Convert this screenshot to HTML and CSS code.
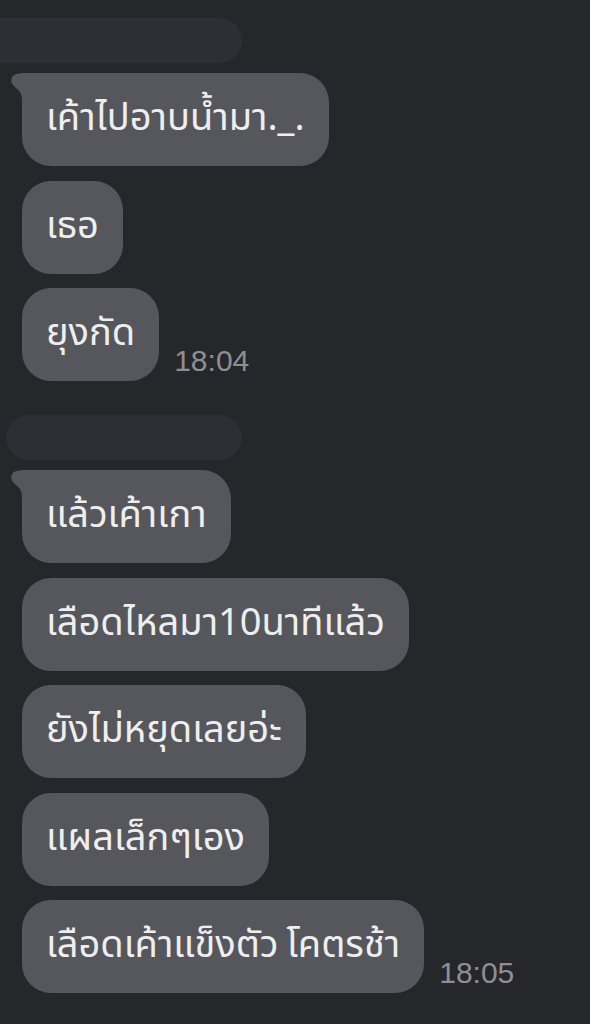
FILE: index.html
```html
<!DOCTYPE html>
<html lang="th">
<head>
<meta charset="utf-8">
<link rel="stylesheet" href="styles.css">
</head>
<body>
<div class="chat">
  <div class="name-bar first"></div>
  <div class="group">
    <div class="row"><div class="bubble tail"><svg class="tail-svg" viewBox="0 0 16 32" width="16" height="32"><path d="M16 0 L8 0.5 C2 1 -0.5 5 0.5 9 C1.5 13 6 15 9 19 C11 22 11 26 11 32 L16 32 Z"/></svg>เค้าไปอาบน้ำมา._.</div></div>
    <div class="row"><div class="bubble">เธอ</div></div>
    <div class="row"><div class="bubble">ยุงกัด</div><span class="time">18:04</span></div>
  </div>
  <div class="name-bar second"></div>
  <div class="group">
    <div class="row"><div class="bubble tail"><svg class="tail-svg" viewBox="0 0 16 32" width="16" height="32"><path d="M16 0 L8 0.5 C2 1 -0.5 5 0.5 9 C1.5 13 6 15 9 19 C11 22 11 26 11 32 L16 32 Z"/></svg>แล้วเค้าเกา</div></div>
    <div class="row"><div class="bubble">เลือดไหลมา10นาทีแล้ว</div></div>
    <div class="row"><div class="bubble">ยังไม่หยุดเลยอ่ะ</div></div>
    <div class="row"><div class="bubble">แผลเล็กๆเอง</div></div>
    <div class="row"><div class="bubble">เลือดเค้าแข็งตัว<span class="narrow-space"> </span>โคตรช้า</div><span class="time">18:05</span></div>
  </div>
</div>
</body>
</html>
```

FILE: styles.css
```css
html, body {
  margin: 0;
  padding: 0;
  background: #26272b;
  width: 590px;
  height: 1024px;
  overflow: hidden;
}
.chat {
  display: flex;
  flex-direction: column;
  padding-top: 18px;
}
.name-bar {
  height: 45px;
  border-radius: 23px;
  background: #2c2f33;
}
.name-bar.first {
  width: 262px;
  margin-left: -20px;
}
.name-bar.second {
  width: 236px;
  margin-left: 6px;
  margin-top: 34px;
}
.group {
  display: flex;
  flex-direction: column;
  gap: 14.5px;
  padding-left: 22px;
  margin-top: 10px;
}
.row {
  display: flex;
  align-items: flex-end;
  gap: 15px;
}
.bubble {
  position: relative;
  height: 93px;
  box-sizing: border-box;
  padding: 0 24px 2px;
  display: flex;
  align-items: center;
  background: #55575c;
  border-radius: 29px;
  color: #eeeeee;
  font-family: "Noto Sans Thai", "Noto Sans", "DejaVu Sans", sans-serif;
  font-size: 38px;
  white-space: pre;
}
.narrow-space {
  display: inline-block;
  width: 8px;
}
.bubble.tail {
  border-top-left-radius: 0;
}
.tail-svg {
  position: absolute;
  left: -11px;
  top: 0;
  fill: #55575c;
}
.time {
  font-family: "Liberation Sans", Arial, sans-serif;
  font-size: 30px;
  color: #8e8f93;
  padding-bottom: 3px;
}
```
